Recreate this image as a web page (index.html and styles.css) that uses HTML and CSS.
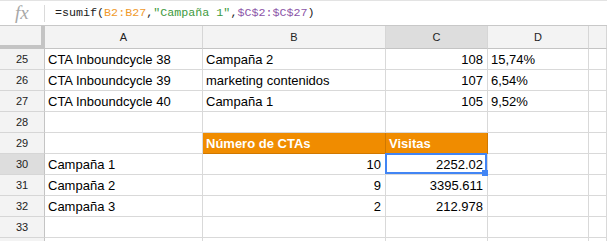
FILE: index.html
```html
<!DOCTYPE html>
<html lang="es">
<head>
    <meta charset="UTF-8">
    <meta name="viewport" content="width=device-width, initial-scale=1.0">
    <title>Hoja de cálculo</title>
    <link rel="stylesheet" href="styles.css">
</head>
<body>
    <!-- barra de fórmulas -->
    <div class="formula-bar">
        <span class="fx">fx</span>
        <span class="fx-sep"></span>
        <code class="formula">=sumif(<span class="ref-a">B2:B27</span>,<span class="str">"Campaña 1"</span>,<span class="ref-b">$C$2:$C$27</span>)</code>
    </div>

    <!-- cuadrícula -->
    <div class="sheet">
        <div class="corner"></div>
        <div class="col-head">A</div>
        <div class="col-head">B</div>
        <div class="col-head active">C</div>
        <div class="col-head">D</div>
        <div class="col-head"></div>

        <div class="row-head">25</div>
        <div class="cell">CTA Inboundcycle 38</div>
        <div class="cell">Campaña 2</div>
        <div class="cell num">108</div>
        <div class="cell">15,74%</div>
        <div class="cell"></div>

        <div class="row-head">26</div>
        <div class="cell">CTA Inboundcycle 39</div>
        <div class="cell">marketing contenidos</div>
        <div class="cell num">107</div>
        <div class="cell">6,54%</div>
        <div class="cell"></div>

        <div class="row-head">27</div>
        <div class="cell">CTA Inboundcycle 40</div>
        <div class="cell">Campaña 1</div>
        <div class="cell num">105</div>
        <div class="cell">9,52%</div>
        <div class="cell"></div>

        <div class="row-head">28</div>
        <div class="cell"></div>
        <div class="cell"></div>
        <div class="cell"></div>
        <div class="cell"></div>
        <div class="cell"></div>

        <div class="row-head">29</div>
        <div class="cell"></div>
        <div class="cell title">Número de CTAs</div>
        <div class="cell title">Visitas</div>
        <div class="cell"></div>
        <div class="cell"></div>

        <div class="row-head active">30</div>
        <div class="cell">Campaña 1</div>
        <div class="cell num">10</div>
        <div class="cell num selected">2252.02</div>
        <div class="cell"></div>
        <div class="cell"></div>

        <div class="row-head">31</div>
        <div class="cell">Campaña 2</div>
        <div class="cell num">9</div>
        <div class="cell num">3395.611</div>
        <div class="cell"></div>
        <div class="cell"></div>

        <div class="row-head">32</div>
        <div class="cell">Campaña 3</div>
        <div class="cell num">2</div>
        <div class="cell num">212.978</div>
        <div class="cell"></div>
        <div class="cell"></div>

        <div class="row-head">33</div>
        <div class="cell"></div>
        <div class="cell"></div>
        <div class="cell"></div>
        <div class="cell"></div>
        <div class="cell"></div>

        <!-- fila siguiente, asoma bajo el borde -->
        <div class="row-head"></div>
        <div class="cell"></div>
        <div class="cell"></div>
        <div class="cell"></div>
        <div class="cell"></div>
        <div class="cell"></div>
    </div>
</body>
</html>
```

FILE: styles.css
```css
* {
    margin: 0;
    padding: 0;
    box-sizing: border-box;
}

body {
    font-family: 'Liberation Sans', Arial, sans-serif;
    background: #fff;
    color: #000;
    overflow: hidden;
}

/* barra de fórmulas */
.formula-bar {
    height: 26px;
    display: flex;
    align-items: center;
    border-top: 1px solid #e3e3e3;
    border-bottom: 1px solid #c8c8c8;
}

.fx {
    width: 44px;
    padding-left: 15px;
    font-family: 'Liberation Serif', 'Times New Roman', serif;
    font-style: italic;
    font-size: 19px;
    color: #a8a8a8;
    line-height: 20px;
}

.fx-sep {
    width: 1px;
    height: 17px;
    background: #dadada;
}

.formula {
    padding-left: 10px;
    font-family: 'Liberation Mono', 'DejaVu Sans Mono', monospace;
    font-size: 11.7px;
    color: #222;
    line-height: 20px;
}

.ref-a { color: #f09a2c; }
.str { color: #3d9a3d; }
.ref-b { color: #8c55a8; }

/* cuadrícula */
.sheet {
    display: grid;
    grid-template-columns: 45px 158px 183px 102px 101px 1fr;
    grid-template-rows: 23px;
    grid-auto-rows: 21px;
}

.corner {
    background: #f3f3f3;
    border-right: 4px solid #c4c4c4;
    border-bottom: 4px solid #c4c4c4;
}

.col-head {
    background: #f3f3f3;
    border-right: 1px solid #d6d6d6;
    border-bottom: 1px solid #c4c4c4;
    font-size: 11px;
    color: #222;
    text-align: center;
    line-height: 22px;
}

.row-head {
    background: #f3f3f3;
    border-right: 1px solid #c4c4c4;
    border-bottom: 1px solid #d6d6d6;
    font-size: 11px;
    color: #222;
    text-align: center;
    line-height: 20px;
}

.col-head.active,
.row-head.active {
    background: #dddddd;
}

.cell {
    position: relative;
    border-right: 1px solid #d9d9d9;
    border-bottom: 1px solid #d9d9d9;
    padding: 0 3px;
    font-size: 13px;
    line-height: 21px;
    white-space: nowrap;
}

.cell.num {
    text-align: right;
    padding-right: 4px;
}

.cell.title {
    background: #f08c00;
    border-bottom-color: #d07800;
    border-right-color: #d07800;
    color: #fff;
    font-weight: bold;
}

/* celda seleccionada */
.cell.selected::after {
    content: '';
    position: absolute;
    top: -1px;
    left: -1px;
    right: 0;
    bottom: 0;
    border: 2px solid #4285f4;
}

.cell.selected::before {
    content: '';
    position: absolute;
    right: -1px;
    bottom: -2px;
    width: 6px;
    height: 6px;
    background: #4285f4;
    z-index: 1;
}
```
